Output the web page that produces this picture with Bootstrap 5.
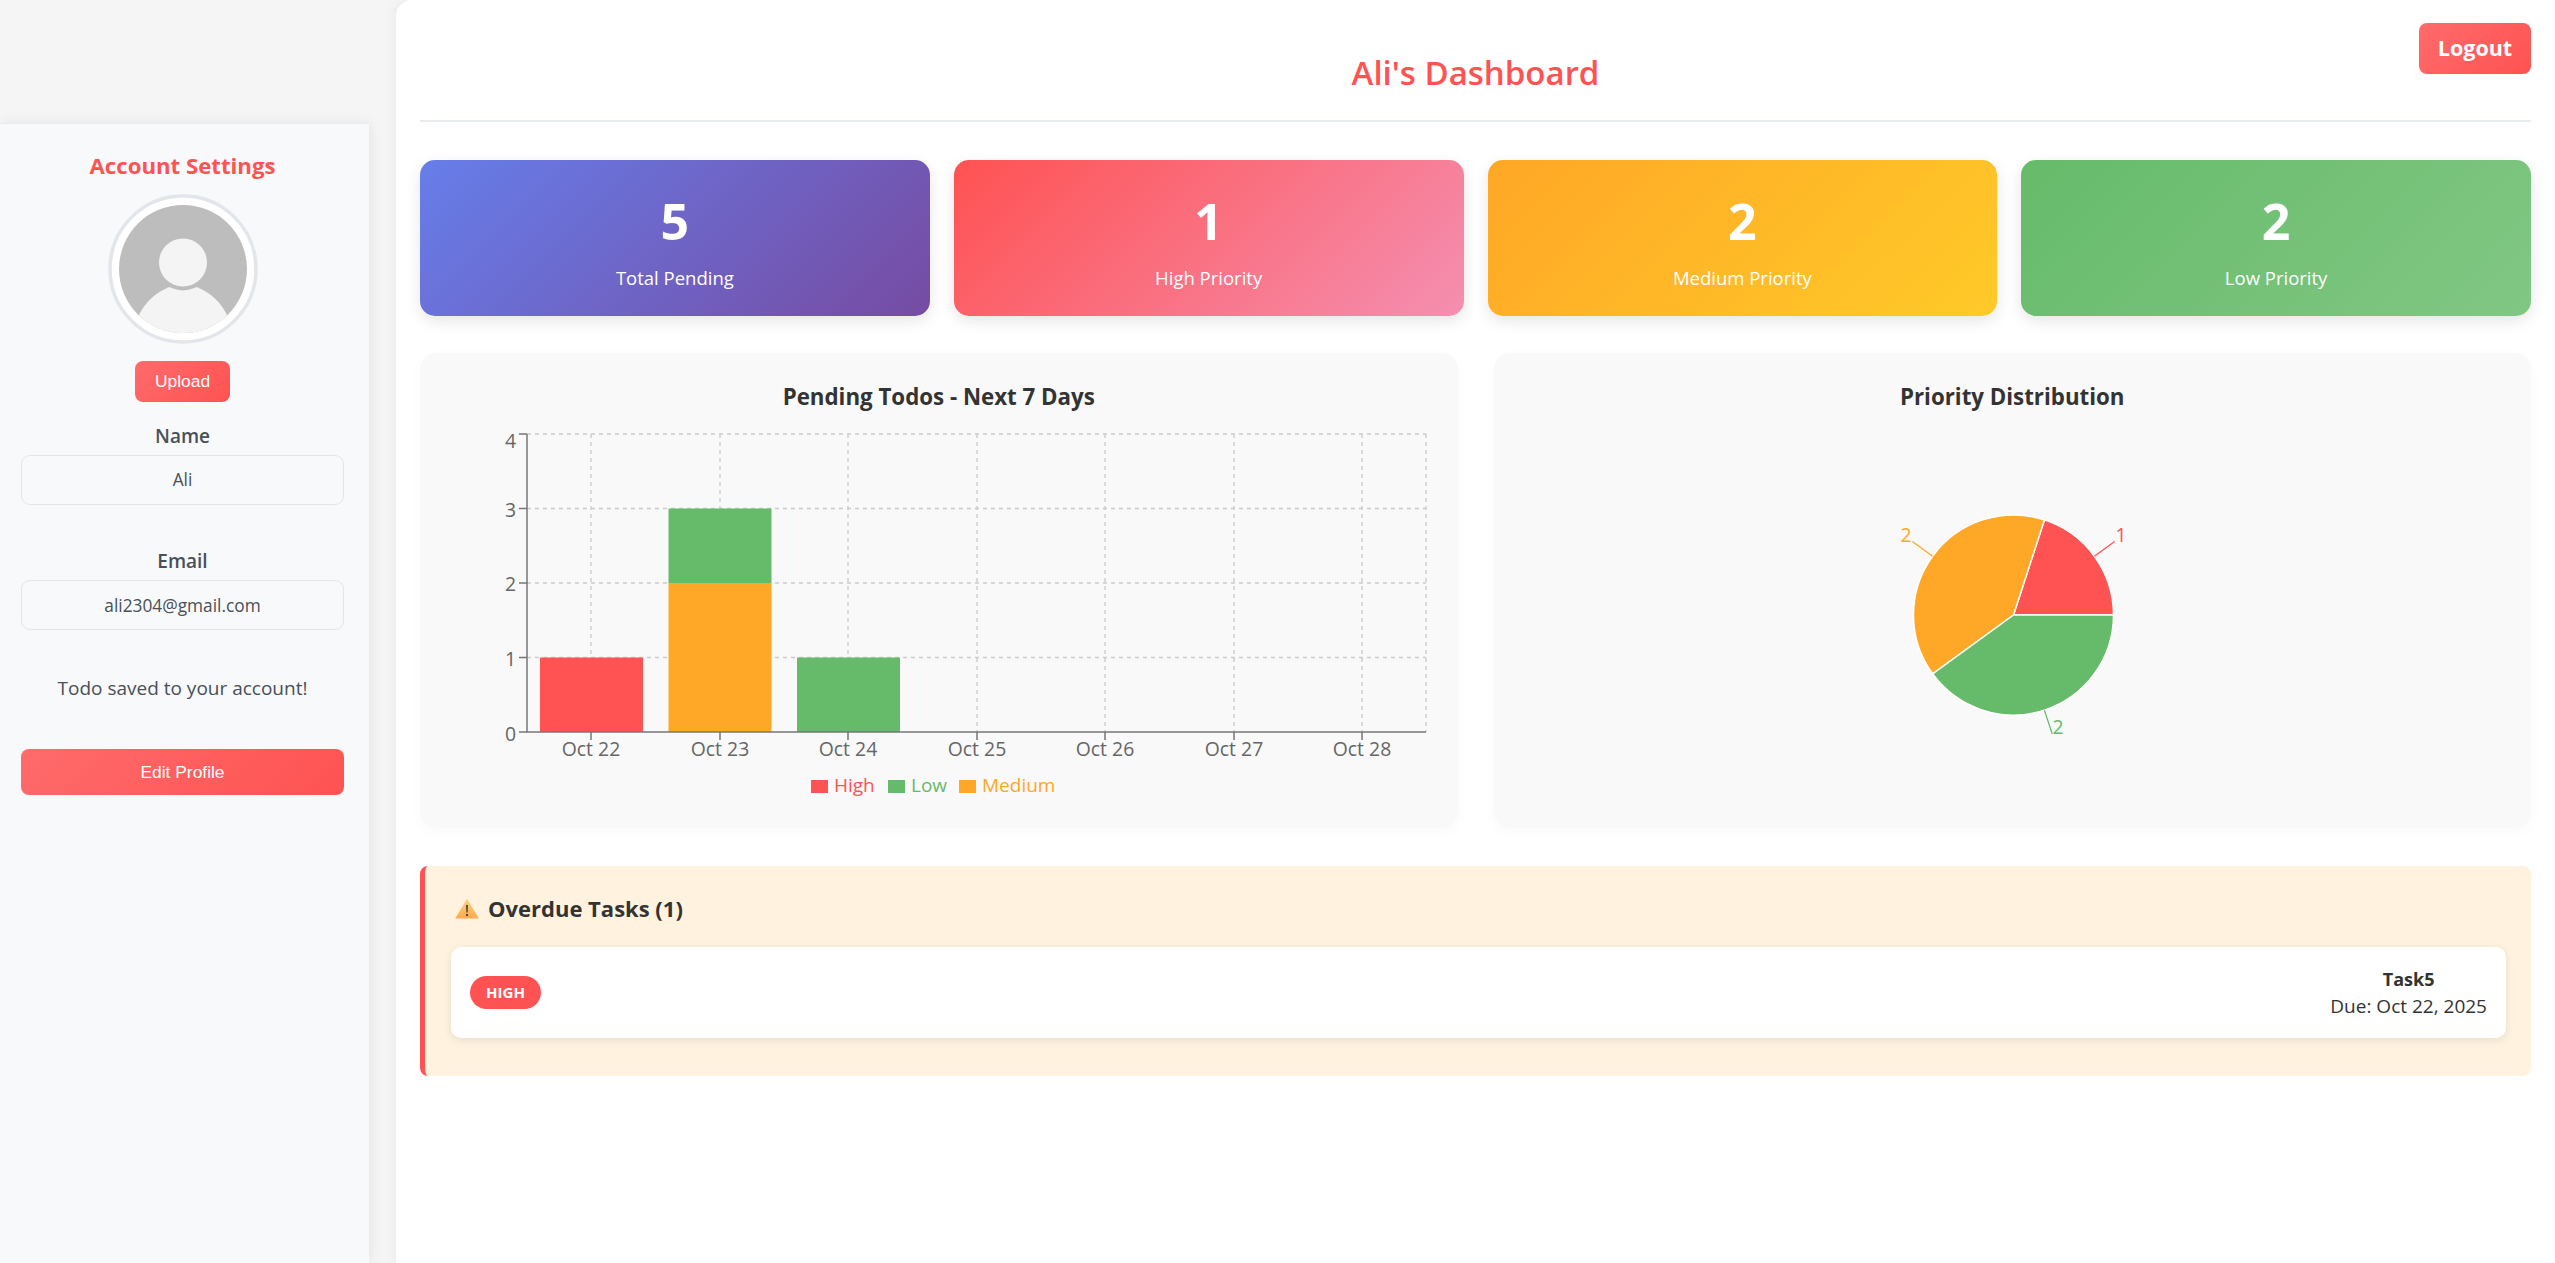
<!DOCTYPE html>
<html lang="en">
<head>
<meta charset="utf-8">
<title>Ali's Dashboard</title>
<link href="https://cdn.jsdelivr.net/npm/bootstrap@5.3.0/dist/css/bootstrap.min.css" rel="stylesheet">
<style>
html,body{height:100%}
body{background:#f5f5f5;font-family:"Open Sans","Noto Sans",sans-serif;color:#333;overflow:hidden}
.app-shell{height:1263px}
.side-col{width:396px;padding-top:123px;flex:none}
.side-panel{width:369px;height:1140px;background:#f8f9fa;border-top:1px solid #e9ecef;box-shadow:2px 0 12px rgba(0,0,0,.07);padding:0 25px 0 21px;text-align:center}
.side-title{font-size:22.2px;font-weight:700;color:#ff5252;line-height:28px;margin:28px 0 14px}
.avatar-svg{display:block;margin:0 auto}
.btn-coral{background:linear-gradient(135deg,#ff6b6b,#ff5252);color:#fff;border:0;font-family:"Liberation Sans",sans-serif;font-size:17.4px;border-radius:8px}
.btn-coral:hover{color:#fff;background:linear-gradient(135deg,#ff6b6b,#ff5252)}
.btn-upload{width:95px;height:41px;padding:0;margin:17px auto 0;display:block}
.name-field{margin-top:21.5px}
.email-field{margin-top:44.5px}
.field-label{font-size:19px;font-weight:600;color:#495057;line-height:25px;margin:0 0 6px}
.field-box{height:50px;background:#f8f9fa;border:1.5px solid #e2e5e9;border-radius:9px;color:#495057;font-size:17.3px;text-align:center;padding:0;box-shadow:none}
.field-box:focus{background:#f8f9fa;border-color:#e2e5e9;color:#495057;box-shadow:none}
.side-msg{font-size:19px;color:#495057;line-height:28px;margin:43.7px 0 47px}
.btn-edit{width:100%;height:46px;padding:0}
.main-panel{flex:1;background:#fff;border-top-left-radius:16px;box-shadow:-2px 0 12px rgba(0,0,0,.05);padding:23px 24px 0;min-width:0}
.head-grid{display:grid;grid-template-columns:1fr auto 1fr;align-items:start;border-bottom:2px solid #e9ecef;height:99px}
.dash-title{grid-column:2;font-size:33px;font-weight:600;color:#ff5252;line-height:44px;margin:28px 0 0}
.btn-logout{grid-column:3;justify-self:end;width:112px;height:51px;padding:0;font-family:"Open Sans",sans-serif;font-size:21.5px;font-weight:700;background:linear-gradient(135deg,#ff6b6b,#ff5252)}
.stat-grid{display:grid;grid-template-columns:repeat(4,1fr);gap:24px;margin-top:38px}
.stat-tile{height:156px;border-radius:15px;color:#fff;text-align:center;box-shadow:0 5px 15px rgba(0,0,0,.1);padding-top:27px}
.tile-num{font-size:50px;font-weight:700;line-height:68px}
.tile-label{font-size:18.5px;line-height:26px;margin-top:10px}
.tile-a{background:linear-gradient(135deg,#667eea,#764ba2)}
.tile-b{background:linear-gradient(135deg,#ff5252,#f48fb1)}
.tile-c{background:linear-gradient(135deg,#ffa726,#ffca28)}
.tile-d{background:linear-gradient(135deg,#66bb6a,#81c784)}
.chart-grid{display:grid;grid-template-columns:1fr 1fr;gap:36px;margin-top:37px}
.chart-tile{height:475px;background:#f9f9f9;border-radius:16px;box-shadow:0 4px 15px rgba(0,0,0,.025);padding:24px}
.chart-title{font-size:22.3px;font-weight:700;color:#333;line-height:40px;text-align:center;margin:0}
.chart-svg{display:block;width:100%;height:387px}
.chart-svg text{font-family:"Open Sans","Noto Sans",sans-serif}
.tick-txt{font-size:19.4px;fill:#666}
.leg-txt{font-size:19px}
.overdue-box{height:210px;margin-top:38px;background:#fff3e0;border-left:5px solid #ff5252;border-radius:8px;padding:25px 25px 0 26px}
.overdue-head{font-size:22px;font-weight:700;color:#333;line-height:34px;gap:9px;padding-left:4px;margin:0 0 22px}
.overdue-row{height:91px;background:#fff;border-radius:10px;box-shadow:0 2px 8px rgba(0,0,0,.1);padding:0 19px}
.pill-high{background:#ff5252;color:#fff;font-size:15px;font-weight:700;width:71px;height:33px;line-height:33px;border-radius:17px;text-align:center}
.due-block{font-size:19px;line-height:27px;color:#333;text-align:center}
.due-name{font-weight:700;font-size:18px}
</style>
</head>
<body>
<div class="app-shell d-flex">
  <aside class="side-col">
    <div class="side-panel">
      <h2 class="side-title">Account Settings</h2>
      <svg class="avatar-svg" width="150" height="150" viewBox="0 0 150 150" role="img" aria-label="Avatar">
        <defs><clipPath id="avclip"><circle cx="75" cy="75" r="64"/></clipPath></defs>
        <circle cx="75" cy="75" r="73" fill="#fff" stroke="#e2e6ea" stroke-width="3.5"/>
        <circle cx="75" cy="75" r="64" fill="#bdbdbd"/>
        <g clip-path="url(#avclip)">
          <ellipse cx="75" cy="152" rx="51" ry="61" fill="#f4f4f4"/>
          <circle cx="75" cy="68.5" r="28" fill="#bdbdbd"/>
          <circle cx="75" cy="68.5" r="24" fill="#f4f4f4"/>
        </g>
      </svg>
      <button class="btn btn-coral btn-upload" type="button">Upload</button>
      <div class="name-field">
        <label class="field-label d-block">Name</label>
        <input class="form-control field-box" type="text" value="Ali" readonly>
      </div>
      <div class="email-field">
        <label class="field-label d-block">Email</label>
        <input class="form-control field-box" type="text" value="ali2304@gmail.com" readonly>
      </div>
      <p class="side-msg">Todo saved to your account!</p>
      <button class="btn btn-coral btn-edit" type="button">Edit Profile</button>
    </div>
  </aside>
  <main class="main-panel">
    <header class="head-grid">
      <h1 class="dash-title">Ali's Dashboard</h1>
      <button class="btn btn-coral btn-logout" type="button">Logout</button>
    </header>
    <section class="stat-grid">
      <div class="stat-tile tile-a"><div class="tile-num">5</div><div class="tile-label">Total Pending</div></div>
      <div class="stat-tile tile-b"><div class="tile-num">1</div><div class="tile-label">High Priority</div></div>
      <div class="stat-tile tile-c"><div class="tile-num">2</div><div class="tile-label">Medium Priority</div></div>
      <div class="stat-tile tile-d"><div class="tile-num">2</div><div class="tile-label">Low Priority</div></div>
    </section>
    <section class="chart-grid">
      <div class="chart-tile">
        <h3 class="chart-title">Pending Todos - Next 7 Days</h3>
        <svg class="chart-svg" viewBox="444 417 989.5 387" role="img" aria-label="Bar chart">
          <g stroke="#ccc" stroke-dasharray="4 4" stroke-width="1.4" fill="none">
            <path d="M527 434H1426M527 508.5H1426M527 583H1426M527 657.5H1426"/>
            <path d="M591 434V732M720 434V732M848 434V732M977 434V732M1105 434V732M1234 434V732M1362 434V732M1426 434V732"/>
          </g>
          <rect x="540" y="657.5" width="103" height="74.5" fill="#ff5252"/>
          <rect x="668.5" y="583" width="103" height="149" fill="#ffa726"/>
          <rect x="668.5" y="508.5" width="103" height="74.5" fill="#66bb6a"/>
          <rect x="797" y="657.5" width="103" height="74.5" fill="#66bb6a"/>
          <g stroke="#777" stroke-width="1.5" fill="none">
            <path d="M527 434V732H1426"/>
            <path d="M519 434H527M519 508.5H527M519 583H527M519 657.5H527M519 732H527"/>
            <path d="M591 732V740M720 732V740M848 732V740M977 732V740M1105 732V740M1234 732V740M1362 732V740"/>
          </g>
          <g class="tick-txt" text-anchor="end">
            <text x="516" y="448">4</text><text x="516" y="517">3</text><text x="516" y="591">2</text><text x="516" y="666">1</text><text x="516" y="741">0</text>
          </g>
          <g class="tick-txt" text-anchor="middle">
            <text x="591" y="756">Oct 22</text><text x="720" y="756">Oct 23</text><text x="848" y="756">Oct 24</text><text x="977" y="756">Oct 25</text><text x="1105" y="756">Oct 26</text><text x="1234" y="756">Oct 27</text><text x="1362" y="756">Oct 28</text>
          </g>
          <rect x="811" y="780" width="17" height="13" fill="#ff5252"/>
          <text class="leg-txt" x="834" y="792" fill="#ff5252">High</text>
          <rect x="888" y="780" width="17" height="13" fill="#66bb6a"/>
          <text class="leg-txt" x="911" y="792" fill="#66bb6a">Low</text>
          <rect x="959" y="780" width="17" height="13" fill="#ffa726"/>
          <text class="leg-txt" x="982" y="792" fill="#ffa726">Medium</text>
        </svg>
      </div>
      <div class="chart-tile">
        <h3 class="chart-title">Priority Distribution</h3>
        <svg class="chart-svg" viewBox="1517.5 417 989.5 387" role="img" aria-label="Pie chart">
          <g stroke="#fff" stroke-width="1.5">
            <path d="M2013 615L2113 615A100 100 0 0 0 2043.9 519.9Z" fill="#ff5252"/>
            <path d="M2013 615L2043.9 519.9A100 100 0 0 0 1932.1 673.8Z" fill="#ffa726"/>
            <path d="M2013 615L1932.1 673.8A100 100 0 0 0 2113 615Z" fill="#66bb6a"/>
          </g>
          <g fill="none" stroke-width="1.3">
            <path d="M2093.9 556.2L2114.1 541.5" stroke="#ff5252"/>
            <path d="M1932.1 556.2L1911.9 541.5" stroke="#ffa726"/>
            <path d="M2043.9 710.1L2051.7 733.9" stroke="#66bb6a"/>
          </g>
          <g class="tick-txt">
            <text x="2115" y="542" style="fill:#ff5252">1</text>
            <text x="1911" y="542" text-anchor="end" style="fill:#ffa726">2</text>
            <text x="2052" y="734" style="fill:#66bb6a">2</text>
          </g>
        </svg>
      </div>
    </section>
    <section class="overdue-box">
      <h3 class="overdue-head d-flex align-items-center">
        <svg width="24" height="21" viewBox="0 0 24 21" aria-hidden="true">
          <defs><linearGradient id="warn" x1="0" y1="0" x2="0" y2="1"><stop offset="0" stop-color="#ffd27a"/><stop offset="1" stop-color="#ffa94d"/></linearGradient></defs>
          <path d="M12 .8L23.8 20.5H.2Z" fill="url(#warn)"/>
          <path d="M11 7h2l-.3 7.5h-1.4Z" fill="#4a4a4a"/><circle cx="12" cy="17" r="1.2" fill="#4a4a4a"/>
        </svg>
        <span>Overdue Tasks (1)</span>
      </h3>
      <div class="overdue-row d-flex align-items-center justify-content-between">
        <span class="pill-high">HIGH</span>
        <div class="due-block"><div class="due-name">Task5</div><div>Due: Oct 22, 2025</div></div>
      </div>
    </section>
  </main>
</div>
<script src="https://cdn.jsdelivr.net/npm/bootstrap@5.3.0/dist/js/bootstrap.bundle.min.js"></script>
</body>
</html>
